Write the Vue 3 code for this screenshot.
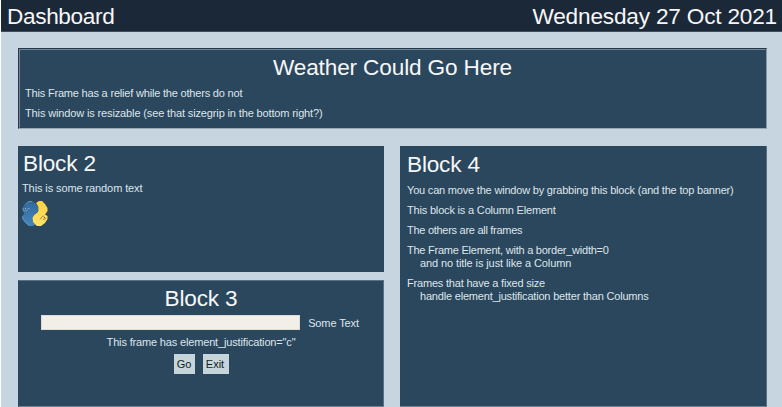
<script setup>
const notes = [
  { id: 'grab', lines: ['You can move the window by grabbing this block (and the top banner)'] },
  { id: 'column', lines: ['This block is a Column Element'] },
  { id: 'others', lines: ['The others are all frames'] },
  { id: 'border', lines: ['The Frame Element, with a border_width=0', 'and no title is just like a Column'] },
  { id: 'fixed', lines: ['Frames that have a fixed size', 'handle element_justification better than Columns'] },
]
</script>

<template>
  <div class="window">
    <header class="banner">
      <h1 class="title brand">Dashboard</h1>
      <div class="title date">Wednesday 27 Oct 2021</div>
    </header>
    <main class="content">
      <section class="frame weather">
        <div class="relief">
          <h2 class="title">Weather Could Go Here</h2>
          <p class="text relief-note">This Frame has a relief while the others do not</p>
          <p class="text resize-note">This window is resizable (see that sizegrip in the bottom right?)</p>
        </div>
      </section>
      <div class="columns">
        <div class="left">
          <section class="frame block2">
            <h2 class="title">Block 2</h2>
            <p class="text random">This is some random text</p>
            <svg class="logo" width="26" height="26" viewBox="0 0 26 26">
              <defs>
                <linearGradient id="blue" x1="0" y1="0" x2="0" y2="1">
                  <stop offset="0" stop-color="#32689a" /><stop offset="1" stop-color="#4387be" />
                </linearGradient>
                <linearGradient id="gold" x1="0" y1="0" x2="0" y2="1">
                  <stop offset="0" stop-color="#ffd13c" /><stop offset="1" stop-color="#ffe36c" />
                </linearGradient>
              </defs>
              <path fill="url(#gold)" d="M14 2 L17 0 H20 L23 3 L25.5 7 V10 L23 13.5 L25.5 15 V18 L23 22 L19 25 H15 L11 21.5 L10 17 L12 14 L16 11 V5Z" />
              <path fill="url(#blue)" d="M3 3 L7 0 H10 L14 3 L16.5 6 V10 L12 13.5 L10.5 17 L11 21 L13 23.5 L11 25 H7 L3 21.5 L.5 18 V15 L2.5 12 L.5 10 V7Z" />
              <path fill="none" stroke="#7fa1ba" stroke-width=".7" d="M1 7 L2 10 L5 9.5 L6 7.5 L8 7.5 M3.5 3 L7 .5 H10 M.8 15 V18 L7 24.7" />
              <path fill="none" stroke="#7b7a48" stroke-width=".8" d="M18 18.5 L20 16 M21 18.5 L24 17.5 M20 15.5 L22 15" />
              <rect x="3" y="7" width="1" height="1" fill="#a3bccf" />
              <rect x="22" y="16" width="1" height="1" fill="#4f5f50" />
            </svg>
          </section>
          <section class="frame block3">
            <h2 class="title">Block 3</h2>
            <div class="field-row">
              <input class="field" type="text" aria-label="Some Text" />
              <span class="text some">Some Text</span>
            </div>
            <p class="text justified">This frame has element_justification="c"</p>
            <div class="buttons">
              <button class="go">Go</button>
              <button class="exit">Exit</button>
            </div>
          </section>
        </div>
        <section class="frame block4">
          <h2 class="title">Block 4</h2>
          <div v-for="note in notes" :key="note.id" class="note" :class="note.id">
            <p v-for="line in note.lines" :key="line" class="text">{{ line }}</p>
          </div>
        </section>
      </div>
    </main>
  </div>
</template>

<style>
body { background: #fff; }
</style>

<style scoped>
* { box-sizing: border-box; margin: 0; padding: 0; }
.window {
  width: 782px; height: 407px; overflow: hidden;
  display: flex; flex-direction: column;
  background: #c7d5e0; border-left: 1px solid #fff;
  font-family: "Liberation Sans", Arial, sans-serif;
  color: #f2f4f6;
}
.banner {
  height: 32px; flex: none; display: flex; justify-content: space-between;
  background: #1b2838; border-bottom: 1px solid #3f4d5c;
  padding: 3px 5px 0 6px;
}
.title { height: 26px; font-size: 22.6px; line-height: 28px; font-weight: 400; white-space: pre; color: #f7f7f7; letter-spacing: -.18px; }
.brand { letter-spacing: -.35px; }
.text { font-size: 11px; line-height: 13px; white-space: pre; color: #dfe5ea; letter-spacing: -.18px; }
.content { padding: 16px 15px 0 17px; display: flex; flex-direction: column; gap: 17px; }
.frame { background: #2a475e; }
.weather {
  height: 81px;
  border: 1px solid; border-color: #24384a #8798a6 #9aa8b3 #24384a;
}
.relief {
  height: 100%; border: 1px solid; border-color: #73889a #2a475e #2a475e #73889a;
  padding: 4px 5px 0; display: flex; flex-direction: column;
}
.weather .title { text-align: center; letter-spacing: -.14px; }
.relief-note { margin-top: 7px; letter-spacing: -.19px; }
.resize-note { margin-top: 7px; letter-spacing: -.135px; }
.columns { display: flex; gap: 16px; }
.left { width: 366px; display: flex; flex-direction: column; gap: 8px; }
.block2 { height: 126px; padding: 4px 4px 0; }
.block2 .title { padding-left: 1px; }
.random { margin-top: 6px; letter-spacing: -.1px; }
.logo { display: block; margin-top: 6px; }
.block3 {
  height: 127px; padding: 4px 0 0; border: 1px solid; border-color: #587084 #587084 #6d8496 #2a475e;
  display: flex; flex-direction: column; align-items: center;
}
.field-row { display: flex; align-items: center; gap: 8px; margin-top: 4px; }
.field { width: 259px; height: 15px; border: 1px solid #dcdcd8; background: #f2efe8; border-radius: 0; }
.some { letter-spacing: -.12px; padding-right: 2px; padding-top: 2px; }
.justified { margin-top: 6px; letter-spacing: -.16px; }
.buttons { display: flex; gap: 8px; margin-top: 5px; }
.buttons button {
  height: 20px; border: 0; border-radius: 0; background: #c5d5da; color: #111c24;
  font-family: inherit; font-size: 11px; line-height: 20px;
}
.go { width: 21px; }
.buttons .exit { width: 26px; padding-right: 1px; }
.block4 { width: 367px; height: 261px; padding: 5px 7px 0; border-right: 1px solid #587084; border-bottom: 1px solid #6d8496; }
.note { margin-top: 7px; }
.note .text + .text { padding-left: 13px; }
.others .text { letter-spacing: -.28px; }
.border .text { letter-spacing: -.24px; }
.border .text + .text { letter-spacing: -.1px; }
.grab .text, .fixed .text { letter-spacing: -.195px; }
</style>
